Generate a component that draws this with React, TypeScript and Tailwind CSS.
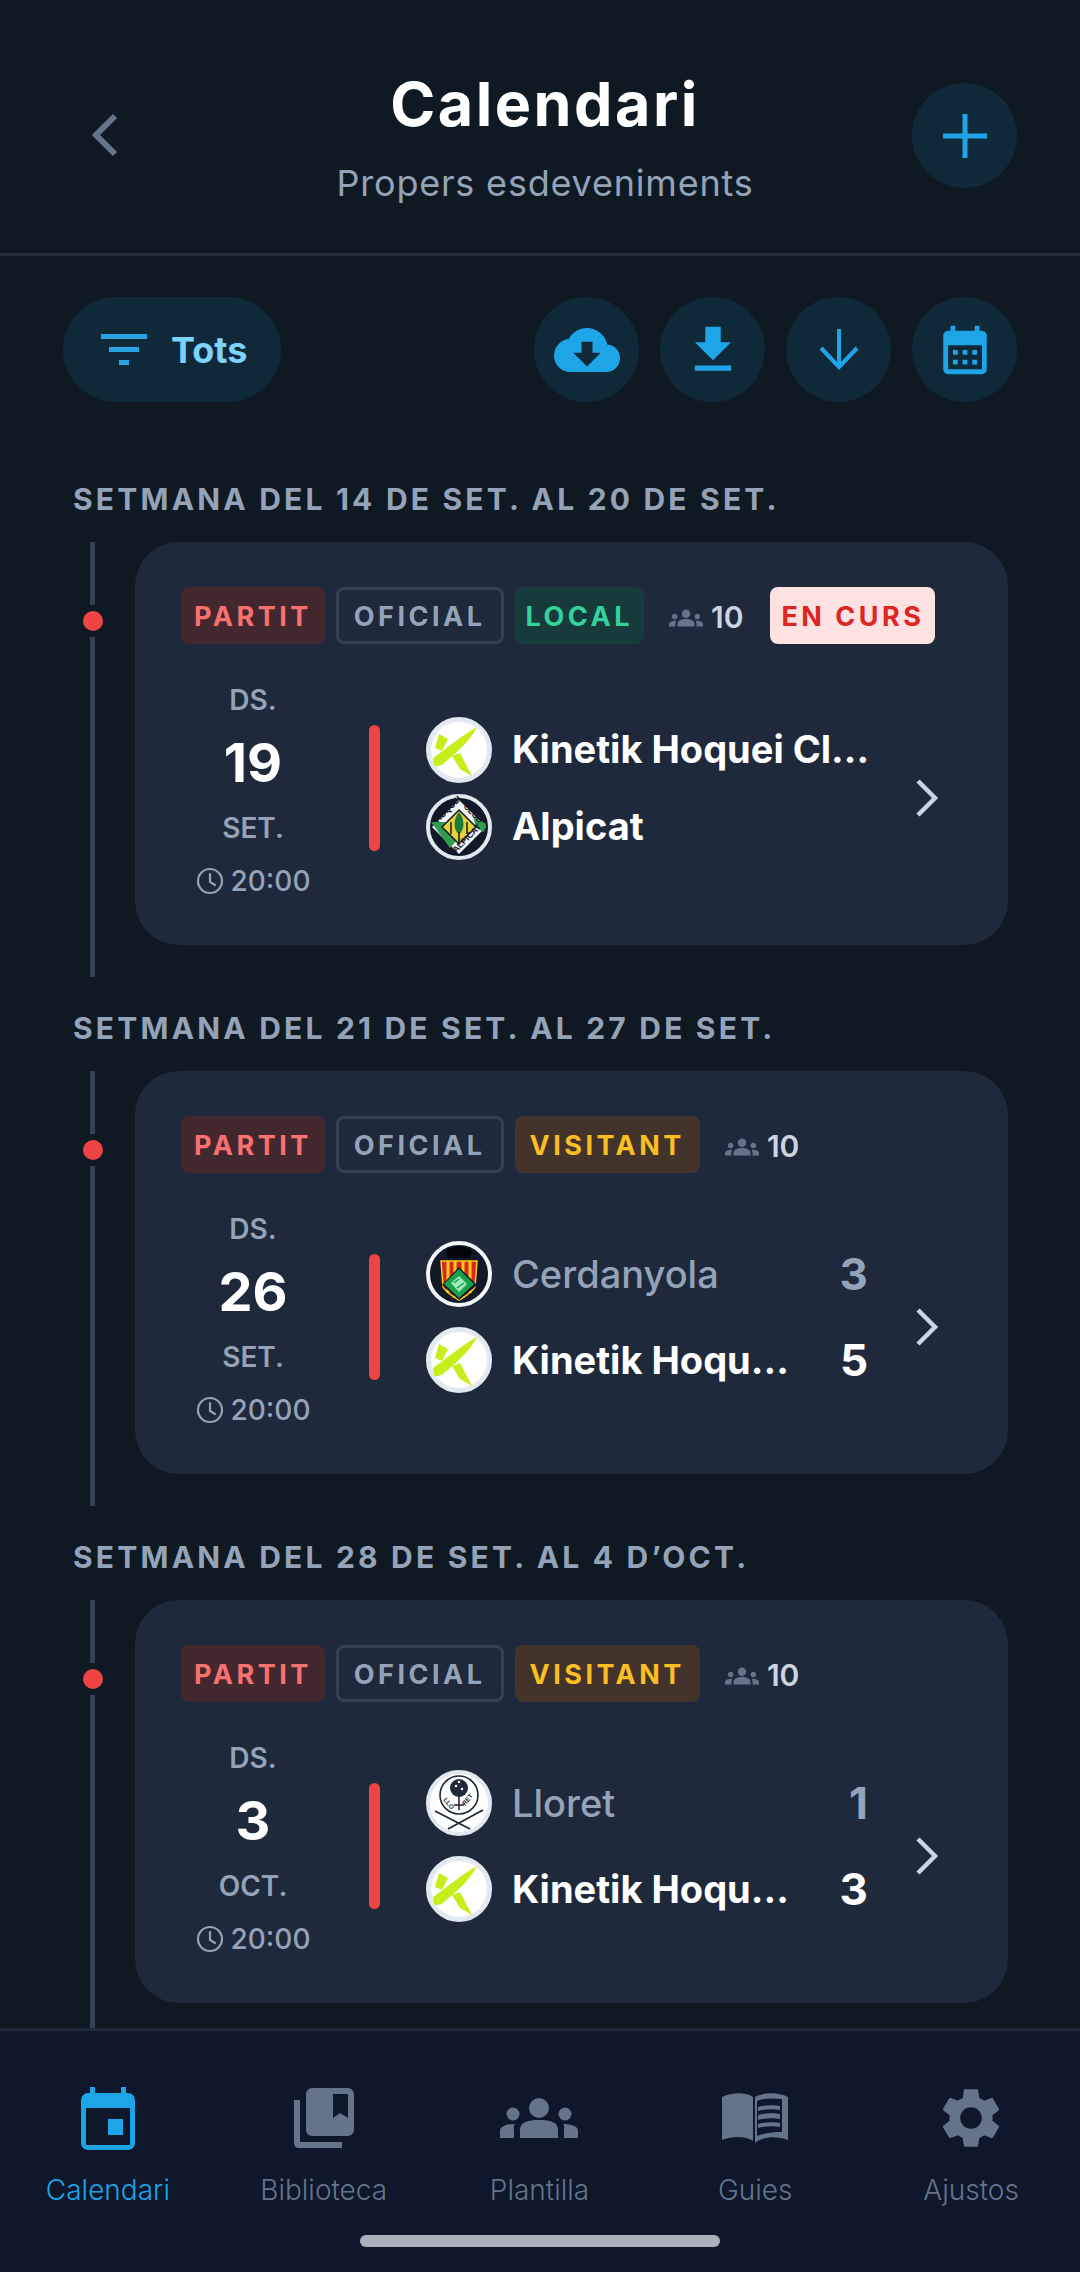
import React from 'react';
import { MdCloudDownload, MdFileDownload, MdCalendarMonth, MdGroups, MdSettings } from 'react-icons/md';

const KinetikLogo = () => (
  <svg viewBox="0 0 66 66" className="w-[66px] h-[66px] shrink-0">
    <circle cx="33" cy="33" r="31" fill="#ffffff" stroke="#e2e8f0" strokeWidth="4" />
    <circle cx="33" cy="33" r="28.5" fill="none" stroke="#cbd5e1" strokeWidth="0.6" />
    <path d="M13 17 L22 22 L16 34 L9 31 Z" fill="#c6ee1a" />
    <path d="M7 41 C20 32 36 18 51 10 C44 24 30 36 17 47 C14 49 9 50 8 48 Z" fill="#c6ee1a" />
    <path d="M26 39 L34 36 L46 59 L34 52 Z" fill="#c6ee1a" />
  </svg>
);

const AlpicatLogo = () => (
  <svg viewBox="0 0 66 66" className="w-[66px] h-[66px] shrink-0">
    <circle cx="33" cy="33" r="31" fill="#111827" stroke="#e2e8f0" strokeWidth="4" />
    <path d="M33 6 L60 33 L33 60 L6 33 Z" fill="#f3f4f6" />
    <path d="M5 28 L19 28 L33 44 L24 54 Z" fill="#2f9e4f" />
    <path d="M47 22 L60 30 L58 38 L50 34 Z" fill="#2f9e4f" />
    <path d="M33 16 L50 33 L33 50 L16 33 Z" fill="#e5d23a" stroke="#111827" strokeWidth="1.5" />
    <path d="M33 18 C39 25 39 36 33 40 C27 36 27 25 33 18 Z" fill="#1f7a37" />
    <path d="M33 38 L33 50 M25 28 L25 40 M41 28 L41 40" stroke="#111827" strokeWidth="1.5" />
    <g fontFamily="Liberation Sans, sans-serif" fontWeight="700" fontSize="8.5" fill="#111827">
      <text transform="translate(12 29) rotate(-45)">HOQUEI</text>
      <text transform="translate(37 13) rotate(45)">CLUB</text>
      <text transform="translate(30 59) rotate(-45)">ALPICAT</text>
    </g>
  </svg>
);

const CerdanyolaLogo = () => (
  <svg viewBox="0 0 66 66" className="w-[66px] h-[66px] shrink-0">
    <circle cx="33" cy="33" r="31" fill="#111827" stroke="#f1f5f9" strokeWidth="4" />
    <path d="M20 10 C25 4 41 4 46 10 L44 17 L22 17 Z" fill="#03050a" />
    <path d="M15 20 L51 20 L49 46 C45 53 38 56 33 59 C28 56 21 53 17 46 Z" fill="#dc2626" stroke="#facc15" strokeWidth="1.5" />
    <path d="M22 20 L22 52 M29 20 L29 57 M37 20 L37 57 M44 20 L44 52" stroke="#facc15" strokeWidth="3" />
    <path d="M33 26 L51 44 L33 59 L16 44 Z" fill="#111827" />
    <path d="M33 28 L48 43 L33 57 L18 43 Z" fill="#16a34a" />
    <path d="M25 42 L33 35 L41 43 L33 51 Z" fill="#bbf7d0" opacity="0.85" />
    <path d="M28 42 L33 38 M31 47 L38 42" stroke="#16a34a" strokeWidth="1.5" />
  </svg>
);

const LloretLogo = () => (
  <svg viewBox="0 0 66 66" className="w-[66px] h-[66px] shrink-0">
    <circle cx="33" cy="33" r="31" fill="#ffffff" stroke="#e2e8f0" strokeWidth="4" />
    <circle cx="33" cy="25" r="19" fill="none" stroke="#1f2937" strokeWidth="1.6" />
    <circle cx="33" cy="18" r="9" fill="#1f2937" />
    <circle cx="30" cy="16" r="1.2" fill="#ffffff" />
    <circle cx="36" cy="19" r="1.2" fill="#ffffff" />
    <circle cx="33" cy="12" r="1.2" fill="#ffffff" />
    <path d="M33 24 L33 40 M28 35 L38 35" stroke="#1f2937" strokeWidth="1.6" />
    <g fontFamily="Liberation Sans, sans-serif" fontWeight="700" fontSize="6.5" fill="#1f2937">
      <text transform="translate(17 30) rotate(50)">LLO</text>
      <text transform="translate(39 36) rotate(-50)">RET</text>
    </g>
    <path d="M9 41 L44 59 M57 40 L22 59" stroke="#1f2937" strokeWidth="1.8" />
  </svg>
);

const logos = { kinetik: KinetikLogo, alpicat: AlpicatLogo, cerdanyola: CerdanyolaLogo, lloret: LloretLogo };

type Team = { logo: keyof typeof logos; name: string; score?: number; lost?: boolean };

type MatchEvent = {
  week: string;
  side: 'LOCAL' | 'VISITANT';
  live?: boolean;
  day: string;
  month: string;
  teams: Team[];
};

const events: MatchEvent[] = [
  {
    week: 'Setmana del 14 de set. al 20 de set.',
    side: 'LOCAL',
    live: true,
    day: '19',
    month: 'SET.',
    teams: [
      { logo: 'kinetik', name: 'Kinetik Hoquei Cl...' },
      { logo: 'alpicat', name: 'Alpicat' },
    ],
  },
  {
    week: 'Setmana del 21 de set. al 27 de set.',
    side: 'VISITANT',
    day: '26',
    month: 'SET.',
    teams: [
      { logo: 'cerdanyola', name: 'Cerdanyola', score: 3, lost: true },
      { logo: 'kinetik', name: 'Kinetik Hoqu...', score: 5 },
    ],
  },
  {
    week: 'Setmana del 28 de set. al 4 d’oct.',
    side: 'VISITANT',
    day: '3',
    month: 'OCT.',
    teams: [
      { logo: 'lloret', name: 'Lloret', score: 1, lost: true },
      { logo: 'kinetik', name: 'Kinetik Hoqu...', score: 3 },
    ],
  },
];

const tagClass = 'h-[57px] pt-[4px] rounded-[8px] flex items-center text-[27px] font-bold tracking-[3.5px]';

const EventCard: React.FC<{ event: MatchEvent }> = ({ event }) => {
  const hasScore = event.teams[0].score !== undefined;
  return (
    <div className="flex-1 h-[403px] bg-[#1e293b] rounded-[44px] pt-[45px] pl-[46px] flex flex-col">
      <div className="flex items-center gap-[11px]">
        <span className={`${tagClass} px-[13px] bg-[#43272f] text-[#f87171]`}>PARTIT</span>
        <span className={`${tagClass} px-[15px] border-[3px] border-[#334155] text-[#94a3b8]`}>OFICIAL</span>
        {event.side === 'LOCAL' ? (
          <span className={`${tagClass} px-[11px] bg-[#173b3d] text-[#34d399]`}>LOCAL</span>
        ) : (
          <span className={`${tagClass} px-[15px] bg-[#43342b] text-[#fbbf24]`}>VISITANT</span>
        )}
        <span className="ml-[14px] pt-[4px] flex items-center gap-[8px] text-[30px] font-semibold text-[#cbd5e1]">
          <MdGroups size={34} className="text-[#64748b]" />
          10
        </span>
        {event.live && <span className={`${tagClass} px-[11px] ml-[16px] bg-[#fee2e2] text-[#dc2626]`}>EN CURS</span>}
      </div>

      <div className="mt-[36px] h-[216px] flex items-center">
        <div className="w-[144px] self-start flex flex-col items-center text-[#94a3b8]">
          <div className="h-[40px] flex items-center text-[28px] font-semibold">DS.</div>
          <div className="h-[64px] mt-[10px] flex items-center text-[54px] font-bold text-white">{event.day}</div>
          <div className="h-[40px] mt-[14px] flex items-center text-[28px] font-semibold">{event.month}</div>
          <div className="h-[36px] mt-[15px] flex items-center gap-[7px] text-[28px] font-medium whitespace-nowrap">
            <svg viewBox="0 0 28 28" className="w-[28px] h-[28px]" fill="none" stroke="currentColor" strokeWidth="2.2" strokeLinecap="round">
              <circle cx="14" cy="14" r="12" />
              <path d="M14 7 L14 15 L19 18" />
            </svg>
            20:00
          </div>
        </div>

        <div className="ml-[44px] w-[11px] h-[126px] rounded-full bg-[#ef4444]" />

        <div className={`ml-[46px] w-[442px] flex flex-col ${hasScore ? 'gap-[20px]' : 'gap-[11px]'}`}>
          {event.teams.map((team) => {
            const Logo = logos[team.logo];
            return (
              <div key={team.logo} className="flex items-center gap-[20px]">
                <Logo />
                <span className={`flex-1 whitespace-nowrap text-[38px] ${team.lost ? 'font-medium text-[#94a3b8]' : 'font-bold text-white'}`}>
                  {team.name}
                </span>
                {team.score !== undefined && (
                  <span className={`text-[44px] font-bold ${team.lost ? 'text-[#94a3b8]' : 'text-white'}`}>{team.score}</span>
                )}
              </div>
            );
          })}
        </div>

        <svg viewBox="0 0 24 38" className="ml-[47px] mt-[20px] w-[24px] h-[38px]" fill="none" stroke="#cbd5e1" strokeWidth="4.5">
          <path d="M3 2 L20 19 L3 36" />
        </svg>
      </div>
    </div>
  );
};

const TimelineRail = () => (
  <div className="w-[72px] pl-[20px] h-full flex flex-col items-start">
    <div className="ml-[7px] w-[5px] h-[63px] bg-[#334155]" />
    <div className="mt-[6px] w-[20px] h-[20px] rounded-full bg-[#ef4444]" />
    <div className="ml-[7px] mt-[6px] w-[5px] flex-1 bg-[#334155]" />
  </div>
);

const CircleButton: React.FC<{ children: React.ReactNode }> = ({ children }) => (
  <div className="w-[105px] h-[105px] rounded-full bg-[#0f2939] flex items-center justify-center text-[#1da5e8]">{children}</div>
);

const BibliotecaIcon = () => (
  <svg viewBox="0 0 60 60" className="w-[60px] h-[60px]" fill="currentColor">
    <path d="M0 12 L6 12 L6 54 L48 54 L48 60 L5 60 C2 60 0 58 0 55 Z" />
    <path d="M18 0 L54 0 C57 0 60 3 60 6 L60 42 C60 45 57 48 54 48 L18 48 C15 48 12 45 12 42 L12 6 C12 3 15 0 18 0 Z M39 6 L39 30 L46 25 L54 30 L54 6 Z" fillRule="evenodd" />
  </svg>
);

const CalendarTabIcon = () => (
  <svg viewBox="0 0 54 63" className="w-[54px] h-[63px]" fill="#1da5e8">
    <rect x="9" y="0" width="5" height="10" />
    <rect x="40" y="0" width="5" height="10" />
    <rect x="0" y="6" width="54" height="57" rx="7" />
    <rect x="5" y="21" width="44" height="37" fill="#0f172a" />
    <rect x="27" y="32" width="15" height="16" />
  </svg>
);

const PlantillaIcon = () => (
  <svg viewBox="0 0 78 40" className="w-[78px] h-[40px]" fill="currentColor">
    <circle cx="39" cy="10" r="10" />
    <path d="M20 40 L20 32 C20 24 28 22 39 22 C50 22 58 24 58 32 L58 40 Z" />
    <circle cx="13" cy="16" r="6.5" />
    <path d="M0 40 L0 33 C0 28 7 26 15 26 C13 28 14 31 14 34 L14 40 Z" />
    <circle cx="65" cy="16" r="6.5" />
    <path d="M78 40 L78 33 C78 28 71 26 63 26 C65 28 64 31 64 34 L64 40 Z" />
  </svg>
);

const GuiesIcon = () => (
  <svg viewBox="0 0 66 52" className="w-[66px] h-[52px]" fill="currentColor">
    <path d="M0 5 C10 0 24 0 31 5 L31 49 C24 44 10 44 0 48 Z" />
    <path fillRule="evenodd" d="M33 5 C42 0 56 0 66 5 L66 48 C56 44 42 44 33 51 Z M35 9 L35 44 C42 41 52 40 60 40 L60 7 C50 6 41 6 35 9 Z" />
    <path d="M36 15 C42 13 52 13 58 14 L58 18 C52 17 42 17 36 19 Z M36 23 C42 21 52 21 58 22 L58 27 C52 26 42 26 36 28 Z M36 32 C42 30 52 30 58 31 L58 35 C52 34 42 34 36 36 Z" />
  </svg>
);

const tabs = [
  { label: 'Calendari', icon: <CalendarTabIcon />, active: true },
  { label: 'Biblioteca', icon: <BibliotecaIcon /> },
  { label: 'Plantilla', icon: <PlantillaIcon /> },
  { label: 'Guies', icon: <GuiesIcon /> },
  { label: 'Ajustos', icon: <MdSettings size={72} /> },
];

export default function App() {
  return (
    <div className="w-[1080px] h-[2272px] flex flex-col overflow-hidden bg-[#0f1923] font-[Inter,sans-serif]">
      <header className="h-[256px] shrink-0 border-b-[3px] border-[#232f3e] pl-[90px] pr-[63px] pt-[83px] flex items-start">
        <div className="w-[88px] shrink-0">
          <svg viewBox="0 0 28 44" className="mt-[30px] w-[28px] h-[44px]" fill="none" stroke="#64748b" strokeWidth="6">
            <path d="M25 3 L6 22 L25 41" />
          </svg>
        </div>
        <div className="flex-1 -mt-[16px] flex flex-col items-center">
          <h1 className="h-[76px] flex items-center text-[61px] font-bold tracking-[2.5px] text-white">Calendari</h1>
          <p className="mt-[18px] text-[36px] leading-[44px] tracking-[0.8px] text-[#94a3b8]">Propers esdeveniments</p>
        </div>
        <CircleButton>
          <svg viewBox="0 0 44 44" className="w-[44px] h-[44px]" stroke="currentColor" strokeWidth="5">
            <path d="M22 0 L22 44 M0 22 L44 22" />
          </svg>
        </CircleButton>
      </header>

      <div className="h-[105px] shrink-0 mt-[41px] pl-[63px] pr-[63px] flex items-center justify-between">
        <div className="w-[218px] h-[105px] rounded-full bg-[#0f2939] flex items-center pl-[38px] gap-[24px]">
          <svg viewBox="0 0 46 32" className="w-[46px] h-[32px]" fill="#29a4e0">
            <rect x="0" y="0" width="46" height="5" />
            <rect x="8" y="13" width="30" height="5" />
            <rect x="18" y="26" width="10" height="5" />
          </svg>
          <span className="text-[36px] font-bold text-[#7dd3fc]">Tots</span>
        </div>
        <div className="flex gap-[21px]">
          <CircleButton><MdCloudDownload size={66} /></CircleButton>
          <CircleButton><MdFileDownload size={62} /></CircleButton>
          <CircleButton>
            <svg viewBox="0 0 40 42" className="w-[40px] h-[42px]" fill="none" stroke="currentColor" strokeWidth="4">
              <path d="M20 0 L20 38 M2 19 L20 38 L38 19" />
            </svg>
          </CircleButton>
          <CircleButton><MdCalendarMonth size={58} /></CircleButton>
        </div>
      </div>

      <main className="flex-1 min-h-0 overflow-hidden pt-[77px]">
        {events.map((event) => (
          <section key={event.week} className="h-[529px]">
            <h2 className="h-[40px] pl-[73px] pt-[1px] flex items-center text-[30px] font-bold uppercase tracking-[3.2px] text-[#94a3b8]">
              {event.week}
            </h2>
            <div className="mt-[23px] h-[435px] flex items-start pr-[72px]">
              <div className="h-full flex pl-[63px]">
                <TimelineRail />
              </div>
              <EventCard event={event} />
            </div>
          </section>
        ))}
      </main>

      <nav className="h-[244px] shrink-0 bg-[#0f172a] border-t-[3px] border-[#1e293b] flex flex-col">
        <div className="grid grid-cols-5 pt-[48px] pr-[1px]">
          {tabs.map((tab) => (
            <div key={tab.label} className={`flex flex-col items-center ${tab.active ? 'text-[#1da5e8]' : 'text-[#64748b]'}`}>
              <div className="h-[78px] flex items-center justify-center">{tab.icon}</div>
              <span className="mt-[15px] text-[28px] leading-[36px] font-light">{tab.label}</span>
            </div>
          ))}
        </div>
        <div className="mt-[27px] mx-auto w-[360px] h-[12px] rounded-full bg-[#abb0bb]" />
      </nav>
    </div>
  );
}
